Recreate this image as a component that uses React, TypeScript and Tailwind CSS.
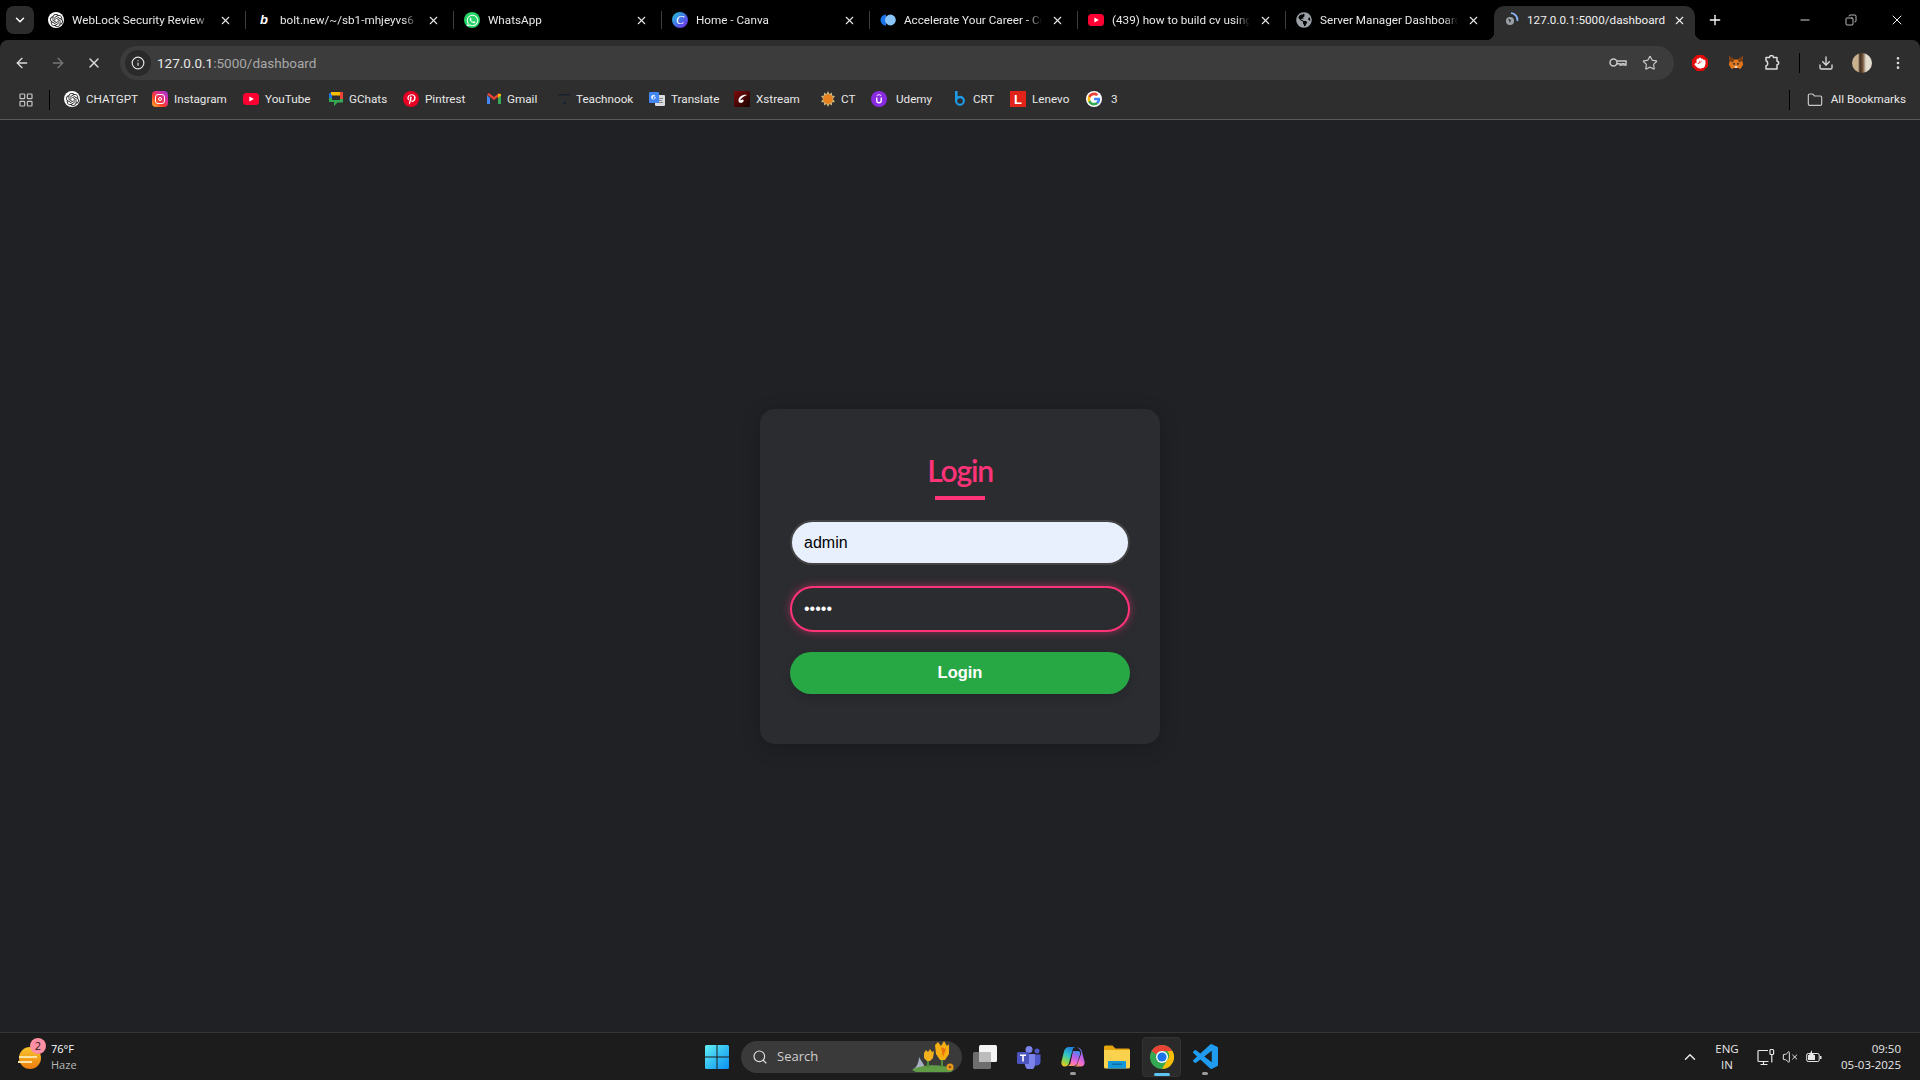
import React from 'react';
import {
  ArrowLeft, ArrowRight, ChevronDown, ChevronUp, Copy, Download, EllipsisVertical, Folder, Hand, Info,
  LayoutGrid, Minus, Plus, Search, Star, VolumeX, X,
} from 'lucide-react';
import { FaGlobeAmericas, FaPinterestP, FaWhatsapp } from 'react-icons/fa';
import { SiOpenai } from 'react-icons/si';

const ChatGptIcon = () => (
  <div className="w-4 h-4 rounded-full bg-white flex items-center justify-center text-[#222] shrink-0">
    <SiOpenai size={13} />
  </div>
);

const WhatsAppIcon = () => (
  <div className="w-4 h-4 rounded-full bg-[#25d366] flex items-center justify-center text-white shrink-0">
    <FaWhatsapp size={13} />
  </div>
);

const YouTubeIcon = () => (
  <svg viewBox="0 0 16 16" className="w-4 h-4 shrink-0">
    <rect x="0" y="2" width="16" height="12" rx="3.5" fill="#ff0033" />
    <path d="M6.4 5.5 10.8 8l-4.4 2.5z" fill="#fff" />
  </svg>
);

const CanvaIcon = () => (
  <div className="w-4 h-4 rounded-full bg-[linear-gradient(135deg,#1fc8d8,#4d5fe8_60%,#7d2ae8)] flex items-center justify-center text-white text-[12px] italic font-['Liberation_Serif',serif] shrink-0">
    C
  </div>
);

const CareerIcon = () => (
  <svg viewBox="0 0 16 16" className="w-4 h-4 shrink-0">
    <path d="M6 2.5a5.5 5.5 0 0 0 0 11z" fill="#1a73e8" />
    <circle cx="10.4" cy="8" r="5.4" fill="#8ac4f8" />
  </svg>
);

const LoadingIcon = () => (
  <svg viewBox="0 0 16 16" className="w-4 h-4 shrink-0">
    <circle cx="7" cy="9" r="4" fill="#9aa0a6" />
    <path d="M5 6.5 8 8l-1 3z" fill="#2e2e2e" />
    <path d="M8 1.2A6.8 6.8 0 0 1 14.4 9" stroke="#8ab4f8" strokeWidth="1.8" fill="none" />
  </svg>
);

const InstagramIcon = () => (
  <div className="w-4 h-4 rounded-[4px] bg-[linear-gradient(45deg,#fdb42a,#f9382e_40%,#d82ca0_70%,#8a3ad8)] flex items-center justify-center shrink-0">
    <div className="w-[10px] h-[10px] rounded-[3px] border border-white flex items-center justify-center">
      <div className="w-1 h-1 rounded-full border border-white" />
    </div>
  </div>
);

const GChatIcon = () => (
  <svg viewBox="0 0 16 16" className="w-4 h-4 shrink-0">
    <path d="M1 2.5 4 1v10l-3 0z" fill="#1a73e8" />
    <path d="M3 1h9v3.5H4L3 3z" fill="#fbbc04" />
    <path d="M12 1h3v8l-3 2z" fill="#ea4335" />
    <path d="M1 11h5v4l3.5-3.5H15V8h-3v1H4V7H1z" fill="#34a853" />
  </svg>
);

const PinterestIcon = () => (
  <div className="w-4 h-4 rounded-full bg-[#e60023] flex items-center justify-center text-white shrink-0">
    <FaPinterestP size={11} />
  </div>
);

const GmailIcon = () => (
  <svg viewBox="0 0 16 16" className="w-4 h-4 shrink-0">
    <path d="M1 4v9h3V7z" fill="#4285f4" />
    <path d="M12 7v6h3V4z" fill="#34a853" />
    <path d="M1 3.5 8 9l7-5.5L13 2 8 6 3 2z" fill="#ea4335" />
    <path d="M12 3v4l3-2.5V3z" fill="#fbbc04" />
  </svg>
);

const TeachnookIcon = () => (
  <svg viewBox="0 0 16 16" className="w-4 h-4 shrink-0">
    <path d="M1 3h12v1.4H1z" fill="#16212e" />
    <path d="M6 11h3v2H6z" fill="#16212e" />
  </svg>
);

const TranslateIcon = () => (
  <svg viewBox="0 0 16 16" className="w-4 h-4 shrink-0">
    <rect x="6" y="4" width="10" height="11" rx="1" fill="#dadce0" />
    <path d="M9 7h5v1H9zm1 2h3v1h-3zm-1 2h5v1H9z" fill="#80868b" />
    <rect x="0" y="1" width="10" height="11" rx="1" fill="#4285f4" />
    <path d="M6.8 6.2H5v1h1.1a1.3 1.3 0 1 1-.4-1.6l.7-.7a2.3 2.3 0 1 0 .4 1.3z" fill="#fff" />
  </svg>
);

const XstreamIcon = () => (
  <svg viewBox="0 0 16 16" className="w-4 h-4 shrink-0">
    <defs>
      <linearGradient id="xs" x1="0" y1="0" x2="1" y2="1">
        <stop offset="0" stopColor="#7c0a0a" />
        <stop offset="1" stopColor="#1a0202" />
      </linearGradient>
    </defs>
    <rect width="16" height="16" rx="1" fill="url(#xs)" />
    <path d="M13 4C9 3 4 6 4.5 10c.3 2 3 2.5 4.5 1 1-1 1-2.500-.5-2.500-1 0-1.500.8-2.500 1C7 7 10 5 13 4z" fill="#fff" />
  </svg>
);

const CtIcon = () => (
  <svg viewBox="0 0 16 16" className="w-4 h-4 shrink-0">
    <path d="M8 0l1.500 3L12 1.500 12 4.500 15 5 13 8l2 3-3 .5 0 3L9.500 13 8 16l-1.500-3L4 14.500 4 11.500 1 11l2-3-2-3 3-.5 0-3L6.500 3z" fill="#c9b27a" />
    <circle cx="8" cy="8" r="4.800" fill="#e8821e" />
  </svg>
);

const UdemyIcon = () => (
  <div className="w-4 h-4 rounded-full bg-[#8a2be2] flex items-center justify-center shrink-0">
    <svg viewBox="0 0 16 16" className="w-3 h-3">
      <path d="M5 6v4a3 3 0 0 0 6 0V6" stroke="#fff" strokeWidth="1.800" fill="none" />
      <path d="M5 3.500 8 2l3 1.500" stroke="#fff" strokeWidth="1.200" fill="none" />
    </svg>
  </div>
);

const CrtIcon = () => (
  <svg viewBox="0 0 16 16" className="w-4 h-4 shrink-0">
    <path d="M3 0h2.600v5.400A5 5 0 1 1 3 9.800zm5 7.200a2.700 2.700 0 1 0 0 5.600 2.700 2.700 0 0 0 0-5.600z" fill="#1e9be8" fillRule="evenodd" />
  </svg>
);

const LenovoIcon = () => (
  <div className="w-4 h-4 bg-[#e2231a] flex items-center justify-center text-white text-[13px] font-bold font-['Liberation_Sans',sans-serif] shrink-0">
    L
  </div>
);

const GoogleIcon = () => (
  <div className="w-4 h-4 rounded-full bg-white flex items-center justify-center shrink-0">
    <svg viewBox="0 0 24 24" className="w-[14px] h-[14px]">
      <path d="M22.560 12.250c0-.780-.070-1.530-.200-2.250H12v4.260h5.920c-.260 1.370-1.040 2.530-2.210 3.310v2.770h3.570c2.080-1.920 3.280-4.740 3.280-8.090z" fill="#4285f4" />
      <path d="M12 23c2.970 0 5.460-.980 7.280-2.660l-3.570-2.770c-.980.660-2.230 1.060-3.710 1.060-2.860 0-5.290-1.930-6.160-4.530H2.180v2.840C3.990 20.530 7.700 23 12 23z" fill="#34a853" />
      <path d="M5.840 14.090c-.220-.660-.350-1.360-.350-2.090s.130-1.430.350-2.090V7.070H2.180C1.430 8.550 1 10.220 1 12s.430 3.450 1.180 4.930l3.660-2.840z" fill="#fbbc05" />
      <path d="M12 5.380c1.620 0 3.060.560 4.210 1.640l3.150-3.150C17.450 2.090 14.970 1 12 1 7.700 1 3.990 3.470 2.180 7.070l3.660 2.840c.870-2.600 3.300-4.530 6.160-4.530z" fill="#ea4335" />
    </svg>
  </div>
);

const GlobeIcon = () => <FaGlobeAmericas size={16} className="text-[#9aa0a6] shrink-0" />;

const BoltIcon = () => (
  <div className="w-4 h-4 flex items-center justify-center text-white text-[13px] font-bold italic font-['Liberation_Sans',sans-serif] shrink-0">
    b
  </div>
);

const KeyIcon = () => (
  <svg viewBox="0 0 18 12" className="w-[18px] h-3 shrink-0" fill="none" stroke="#c7c7c7" strokeWidth="1.5">
    <circle cx="4.500" cy="5.500" r="3.500" />
    <path d="M8 4h9v4h-2V6.800h-2V8h-2V6.800H8" />
  </svg>
);

const ExtensionIcon = () => (
  <svg viewBox="0 0 16 16" className="w-4 h-4 shrink-0" fill="none" stroke="#dcdcdc" strokeWidth="1.500" strokeLinejoin="round">
    <path d="M2 2.500h3.500a2 2 0 0 1 4 0H13v3.800a1.700 1.700 0 0 1 0 3.400V14H2v-3.200a2 2 0 0 0 1.500-2.800A2 2 0 0 0 2 5.700z" />
  </svg>
);

const FoxIcon = () => (
  <svg viewBox="0 0 16 16" className="w-4 h-4 shrink-0">
    <path d="M1 1l5 3.500h4L15 1l-.8 5 1 3.500L12.500 14 10 13H6l-2.500 1L.8 9.500 1.800 6z" fill="#e2761b" />
    <path d="M1 1l5 3.500-1 3-3.200-1.500zM15 1l-5 3.500 1 3 3.200-1.500z" fill="#763d16" />
    <path d="M4.500 8.500 7 8l-.5 2.500zM11.500 8.500 9 8l.5 2.500z" fill="#233447" />
    <path d="M6.500 11h3l-.5 2H7z" fill="#f6d9c0" />
  </svg>
);

const NetworkIcon = () => (
  <svg viewBox="0 0 18 18" className="w-[18px] h-[18px] shrink-0" fill="none" stroke="#e8e8e8" strokeWidth="1.200">
    <path d="M11 2.500H2a1 1 0 0 0-1 1v9a1 1 0 0 0 1 1h9.500" />
    <path d="M6.500 13.500v2.800M3.500 16.500h7" />
    <rect x="13" y="1.500" width="3.600" height="5" rx="1" />
    <path d="M14.800 6.500v8" />
  </svg>
);

const tabs = [
  { title: 'WebLock Security Review', icon: <ChatGptIcon />, sep: true },
  { title: 'bolt.new/~/sb1-mhjeyvs6', icon: <BoltIcon />, sep: true },
  { title: 'WhatsApp', icon: <WhatsAppIcon />, sep: true },
  { title: 'Home - Canva', icon: <CanvaIcon />, sep: true },
  { title: 'Accelerate Your Career - Coursera', icon: <CareerIcon />, sep: true },
  { title: '(439) how to build cv using html', icon: <YouTubeIcon />, sep: true },
  { title: 'Server Manager Dashboard', icon: <GlobeIcon />, sep: false },
];

const bookmarks = [
  { label: 'CHATGPT', icon: <ChatGptIcon />, cls: 'w-[88px] gap-[6px]' },
  { label: 'Instagram', icon: <InstagramIcon />, cls: 'w-[91px] gap-[6px]' },
  { label: 'YouTube', icon: <YouTubeIcon />, cls: 'w-[85px] gap-[6px]' },
  { label: 'GChats', icon: <GChatIcon />, cls: 'w-[75px] gap-[5px]' },
  { label: 'Pintrest', icon: <PinterestIcon />, cls: 'w-[83px] gap-[6px]' },
  { label: 'Gmail', icon: <GmailIcon />, cls: 'w-[71px] gap-[5px]' },
  { label: 'Teachnook', icon: <TeachnookIcon />, cls: 'w-[92px] gap-[3px]' },
  { label: 'Translate', icon: <TranslateIcon />, cls: 'w-[85px] gap-[6px]' },
  { label: 'Xstream', icon: <XstreamIcon />, cls: 'w-[86px] gap-[6px]' },
  { label: 'CT', icon: <CtIcon />, cls: 'w-[51px] gap-[5px]' },
  { label: 'Udemy', icon: <UdemyIcon />, cls: 'w-[81px] gap-[9px]' },
  { label: 'CRT', icon: <CrtIcon />, cls: 'w-[58px] gap-[5px]' },
  { label: 'Lenevo', icon: <LenovoIcon />, cls: 'w-[76px] gap-[6px]' },
  { label: '3', icon: <GoogleIcon />, cls: 'w-[40px] gap-[9px]' },
];

const Tab: React.FC<{ title: string; icon: React.ReactNode; sep: boolean }> = ({ title, icon, sep }) => (
  <div className="w-[208px] h-full flex items-center pl-2 text-[11.7px] text-[#e8e8e8]">
    {icon}
    <span className="ml-2 mr-[7px] pt-px flex-1 min-w-0 overflow-hidden whitespace-nowrap [mask-image:linear-gradient(to_right,black_calc(100%-14px),transparent)]">
      {title}
    </span>
    <X size={13} strokeWidth={2} className="mx-[2px] text-[#e8e8e8] shrink-0" />
    <div className={`w-px h-[18px] ml-[11px] mr-[2px] ${sep ? 'bg-[#3f3f3f]' : 'bg-transparent'}`} />
  </div>
);

const TitleBar = () => (
  <div className="h-10 bg-black flex items-center pl-[6px]">
    <div className="w-[28px] h-[28px] rounded-lg bg-[#2c2c2c] flex items-center justify-center text-white mr-[6px]">
      <ChevronDown size={14} strokeWidth={2.5} />
    </div>
    <div className="flex h-full">
      {tabs.map((t) => (
        <Tab key={t.title} {...t} />
      ))}
    </div>
    <div className="relative w-[201px] h-[34px] self-end ml-[-2px] pb-[6px] bg-[#2e2e2e] rounded-t-[10px] flex items-center pl-[9px] pr-[9px] text-[11.7px] text-[#f0f0f0]">
      <div className="absolute left-[-8px] bottom-0 w-2 h-2 bg-[radial-gradient(circle_at_0_0,transparent_8px,#2e2e2e_8.5px)]" />
      <div className="absolute right-[-8px] bottom-0 w-2 h-2 bg-[radial-gradient(circle_at_100%_0,transparent_8px,#2e2e2e_8.5px)]" />
      <LoadingIcon />
      <span className="ml-2 pt-px flex-1 min-w-0 whitespace-nowrap overflow-hidden">127.0.0.1:5000/dashboard</span>
      <X size={13} strokeWidth={2} className="shrink-0 ml-1" />
    </div>
    <Plus size={16} strokeWidth={2} className="ml-3 text-white" />
    <div className="ml-auto flex items-center text-[#f0f0f0]">
      <div className="w-[46px] flex justify-center">
        <Minus size={14} strokeWidth={1.5} />
      </div>
      <div className="w-[46px] flex justify-center">
        <Copy size={12} strokeWidth={1.5} className="-scale-x-100" />
      </div>
      <div className="w-[46px] flex justify-center">
        <X size={16} strokeWidth={1.5} />
      </div>
    </div>
  </div>
);

const Toolbar = () => (
  <div className="h-10 pt-[6px] bg-[#2e2e2e] rounded-t-lg text-[#c7c7c7]">
    <div className="h-[34px] flex items-center">
      <div className="w-[120px] flex items-center pl-[14px] shrink-0">
        <ArrowLeft size={16} strokeWidth={2} className="text-[#dcdcdc]" />
        <ArrowRight size={16} strokeWidth={2} className="ml-5 text-[#777]" />
        <X size={16} strokeWidth={2} className="ml-5 text-[#dcdcdc]" />
      </div>
      <div className="w-[1554px] h-[34px] rounded-full bg-[#3c3c3c] flex items-center shrink-0">
        <div className="ml-[5px] w-[26px] h-[26px] rounded-full bg-[#2a2a2a] flex items-center justify-center text-[#e3e3e3]">
          <Info size={14} strokeWidth={2} />
        </div>
        <span className="ml-[6px] text-[13.5px] text-[#e8e8e8]">
          127.0.0.1<span className="text-[#a8a8a8]">:5000/dashboard</span>
        </span>
        <div className="ml-auto flex items-center gap-[15px] pr-[16px]">
          <KeyIcon />
          <Star size={16} strokeWidth={1.75} />
        </div>
      </div>
      <div className="flex-1 flex items-center pl-[18px]">
        <div className="w-4 h-4 bg-[#e20a0a] [clip-path:polygon(30%_0,70%_0,100%_30%,100%_70%,70%_100%,30%_100%,0_70%,0_30%)] flex items-center justify-center shrink-0">
          <Hand size={12} fill="#fff" className="text-white" />
        </div>
        <div className="ml-[20px]">
          <FoxIcon />
        </div>
        <div className="ml-[20px]">
          <ExtensionIcon />
        </div>
        <div className="w-px h-[20px] bg-black ml-[19px] shrink-0" />
        <Download size={16} strokeWidth={2} className="ml-[18px] text-[#dcdcdc] shrink-0" />
        <div className="ml-[18px] w-5 h-5 rounded-full bg-[linear-gradient(90deg,#c9b08f_0%,#c9b08f_30%,#3d2a1f_40%,#7a5a40_55%,#e3dccf_70%)] shrink-0" />
        <EllipsisVertical size={16} strokeWidth={2} className="ml-[18px] text-[#dcdcdc] shrink-0" />
      </div>
    </div>
  </div>
);

const BookmarksBar = () => (
  <div className="h-10 bg-[#2e2e2e] border-b border-[#5a5a5a] flex items-center text-[11.7px] text-[#e8e8e8]">
    <div className="w-[49px] flex justify-end pr-[15px] shrink-0">
      <LayoutGrid size={16} strokeWidth={1.75} className="text-[#c7c7c7]" />
    </div>
    <div className="w-px h-[20px] bg-black shrink-0" />
    <div className="ml-[14px] flex items-center">
      {bookmarks.map((b) => (
        <div key={b.label} className={`flex items-center shrink-0 ${b.cls}`}>
          {b.icon}
          <span className="whitespace-nowrap">{b.label}</span>
        </div>
      ))}
    </div>
    <div className="ml-auto flex items-center pr-[14px]">
      <div className="w-px h-[20px] bg-black mr-[17px]" />
      <Folder size={16} strokeWidth={1.75} className="text-[#c7c7c7] mr-[8px]" />
      <span>All Bookmarks</span>
    </div>
  </div>
);

const LoginCard = () => (
  <div className="w-[400px] h-[335px] px-[30px] pt-[39px] rounded-[15px] bg-[#2b2c30] shadow-[0_4px_20px_rgba(0,0,0,0.2)] flex flex-col">
    <h1 className="text-center text-[30px] leading-[44px] font-semibold tracking-[-1.2px] text-[#ff3378] font-['Lato',sans-serif]">
      Login
    </h1>
    <div className="w-[50px] h-1 mx-auto mt-[4px] bg-[#ff3378]" />
    <input
      readOnly
      type="text"
      value="admin"
      className="mt-5 w-full h-[45px] px-[12px] pt-px rounded-full border-2 border-[#444] bg-[#e8f0fe] text-[16px] text-black outline-none font-['Liberation_Sans',sans-serif]"
    />
    <input
      readOnly
      type="password"
      value="admin"
      className="mt-[21px] w-full h-[46px] px-[12px] rounded-full border-2 border-[#ff3378] bg-[#2b2c30] text-[16px] text-white outline-none shadow-[0_0_8px_rgba(255,51,120,0.5)] font-['Liberation_Sans',sans-serif]"
    />
    <button className="mt-5 w-full h-[42px] rounded-full bg-[#28a745] text-white text-[16.5px] font-bold shadow-[0_4px_10px_rgba(0,0,0,0.15)] font-['Liberation_Sans',sans-serif]">
      Login
    </button>
  </div>
);

const WindowsLogo = () => (
  <svg viewBox="0 0 24 24" className="w-[24px] h-[24px] shrink-0">
    <defs>
      <linearGradient id="win" x1="0" y1="0" x2="1" y2="1">
        <stop offset="0" stopColor="#5ff0f5" />
        <stop offset="1" stopColor="#0a8ff0" />
      </linearGradient>
    </defs>
    <path d="M0 1.500A1.500 1.500 0 0 1 1.500 0h10v11.500H0zM12.500 0h10A1.500 1.500 0 0 1 24 1.500v10H12.500zM0 12.500h11.500V24h-10A1.500 1.500 0 0 1 0 22.500zM12.500 12.500H24v10a1.500 1.500 0 0 1-1.500 1.500h-10z" fill="url(#win)" />
  </svg>
);

const Flowers = () => (
  <svg viewBox="0 0 44 32" className="w-[44px] h-[32px] absolute right-[6px] top-0">
    <path d="M1 28c4-1 6-8 6-12 2 4 6 8 6 12z" fill="#aab0c4" />
    <path d="M0 29c10-6 30-6 42-1l-3 3H4z" fill="#5f9c45" />
    <path d="M16 26V16M30 26V14" stroke="#4f8f3a" strokeWidth="2" />
    <path d="M12 12l2-3 2 2 2-3 2 3 2-1-1 7-3 3h-3l-3-3z" fill="#f2b01e" />
    <path d="M23 4l3-3 3 4 3-5 3 5 2-2 0 10-4 6h-5l-4-6z" fill="#f5ae14" />
    <path d="M29 6l2 10 3-8z" fill="#e8730c" />
    <circle cx="38" cy="26" r="3.500" fill="#e89a1c" />
    <circle cx="38" cy="26" r="1.300" fill="#8a4a10" />
  </svg>
);

const TaskView = () => (
  <svg viewBox="0 0 24 24" className="w-[24px] h-[24px] shrink-0">
    <rect x="0" y="7" width="18" height="17" rx="1.500" fill="#6e6e6e" />
    <rect x="6" y="0" width="18" height="17" rx="1.500" fill="#f4f4f4" />
    <rect x="6" y="7" width="12" height="10" fill="#bcbcbc" />
  </svg>
);

const TeamsIcon = () => (
  <svg viewBox="0 0 24 24" className="w-[24px] h-[24px] shrink-0">
    <circle cx="12" cy="4.500" r="3.500" fill="#7b83eb" />
    <circle cx="20" cy="6" r="2.500" fill="#5059c9" />
    <path d="M16 9.500h7.500v7a4 4 0 0 1-7.500 2z" fill="#5059c9" />
    <path d="M6 9h12v10a5 5 0 0 1-10 1.500z" fill="#7b83eb" />
    <rect x="0" y="7" width="12" height="12" rx="1.500" fill="#4b53bc" />
    <path d="M3 9.500h6v1.500H6.800v5.500H5.200V11H3z" fill="#fff" />
  </svg>
);

const CopilotIcon = () => (
  <svg viewBox="0 0 24 24" className="w-[24px] h-[24px] shrink-0">
    <defs>
      <linearGradient id="cpa" x1="0.6" y1="0" x2="0.2" y2="1">
        <stop offset="0" stopColor="#1f7fe0" />
        <stop offset="0.45" stopColor="#35c8c0" />
        <stop offset="0.75" stopColor="#8ad44b" />
        <stop offset="1" stopColor="#f5c32c" />
      </linearGradient>
      <linearGradient id="cpb" x1="0.8" y1="0" x2="0.3" y2="1">
        <stop offset="0" stopColor="#3f8cf0" />
        <stop offset="0.4" stopColor="#b95ee8" />
        <stop offset="0.75" stopColor="#f56fc8" />
        <stop offset="1" stopColor="#f59a5a" />
      </linearGradient>
    </defs>
    <path d="M8 2h7c-2 0-3 1-3.500 3L8 18c-.600 2-2 3.500-4 3.500C1.500 21.500 0 19.500.5 16.500L3 6.500C3.700 3.700 5.500 2 8 2z" fill="url(#cpa)" />
    <path d="M16 2.500c2.700 0 4.500 1.700 5 4.500l2.500 9.500c.6 3-1 5-3.500 5h-7c2 0 3-1 3.500-3L20 9c.4-2.800-1-5.500-4-6.500z" fill="url(#cpb)" />
    <path d="M12 6h5c2 0 2.500 1.500 2 3.500l-2.500 8c-.5 2-2 3.500-4 3.500H6c2 0 3-1.500 3.500-3L12 6z" fill="url(#cpb)" />
  </svg>
);

const FilesIcon = () => (
  <svg viewBox="0 0 26 24" className="w-[26px] h-[24px] shrink-0">
    <path d="M0 2a1.500 1.500 0 0 1 1.500-1.500h7l3 3h13A1.500 1.500 0 0 1 26 5v3H0z" fill="#e5a50f" />
    <path d="M0 5h26v17a1.500 1.500 0 0 1-1.500 1.500h-23A1.500 1.500 0 0 1 0 22z" fill="#fbd24e" />
    <path d="M5 16h16a1 1 0 0 1 1 1v6.500H4V17a1 1 0 0 1 1-1z" fill="#1597d8" />
    <rect x="8" y="18.500" width="10" height="1.500" fill="#0d6fa8" />
  </svg>
);

const ChromeIcon = () => (
  <svg viewBox="0 0 24 24" className="w-[24px] h-[24px] shrink-0">
    <circle cx="12" cy="12" r="12" fill="#34a853" />
    <path d="M12 0a12 12 0 0 1 10.400 6H12a6 6 0 0 0-5.500 3.600L1.600 6A12 12 0 0 1 12 0z" fill="#ea4335" />
    <path d="M22.400 6A12 12 0 0 1 12 24l5.200-9a6 6 0 0 0 0-9z" fill="#fbbc04" />
    <circle cx="12" cy="12" r="6" fill="#fff" />
    <circle cx="12" cy="12" r="4.600" fill="#1a73e8" />
  </svg>
);

const VsCodeIcon = () => (
  <svg viewBox="0 0 24 24" className="w-[25px] h-[25px] shrink-0">
    <path
      fill="#1f9cf0"
      d="M23.150 2.587L18.210.21a1.494 1.494 0 0 0-1.705.29l-9.460 8.630-4.120-3.128a.999.999 0 0 0-1.276.057L.327 7.261A1 1 0 0 0 .326 8.740L3.899 12 .326 15.260a1 1 0 0 0 .001 1.479L1.650 17.940a.999.999 0 0 0 1.276.057l4.120-3.128 9.460 8.630a1.492 1.492 0 0 0 1.704.29l4.942-2.377A1.500 1.500 0 0 0 24 20.060V3.939a1.500 1.500 0 0 0-.850-1.352zm-5.146 14.861L10.826 12l7.178-5.448v10.896z"
    />
  </svg>
);

const Taskbar = () => (
  <div className="h-12 bg-[#1c1c1c] border-t border-[#363636] flex items-center text-[#e8e8e8] font-['Open_Sans',sans-serif]">
    <div className="w-[705px] flex items-center pl-[19px] shrink-0">
      <div className="relative w-[24px] h-[24px] mt-1 shrink-0">
        <div className="w-[22px] h-[22px] rounded-full bg-[linear-gradient(#f7c62f,#ee7d0c)]" />
        <div className="absolute left-0 top-[9px] w-[18px] h-[2px] bg-[#fbe3a3]" />
        <div className="absolute left-[-1px] top-[14px] w-[14px] h-[2px] bg-[#fbe3a3]" />
        <div className="absolute right-[-3px] top-[-9px] w-4 h-4 rounded-full bg-[#ff8fa3] text-[#222] text-[11px] leading-4 text-center">
          2
        </div>
      </div>
      <div className="ml-[8px] text-[11px] leading-[16px]">
        <div className="text-white">76°F</div>
        <div className="text-[#b8b8b8]">Haze</div>
      </div>
    </div>
    <WindowsLogo />
    <div className="relative ml-[12px] w-[221px] h-[32px] rounded-full bg-[#3a3a3a] flex items-center pl-[11px] text-[#cfcfcf] text-[13px] shrink-0">
      <Search size={16} strokeWidth={1.75} className="text-[#e0e0e0]" />
      <span className="ml-[9px]">Search</span>
      <Flowers />
    </div>
    <div className="ml-[11px]">
      <TaskView />
    </div>
    <div className="ml-[20px]">
      <TeamsIcon />
    </div>
    <div className="relative ml-[20px]">
      <CopilotIcon />
      <div className="absolute left-[9px] bottom-[-6px] w-[6px] h-[3px] rounded-full bg-[#9a9a9a]" />
    </div>
    <div className="ml-[19px]">
      <FilesIcon />
    </div>
    <div className="relative ml-[12px] w-[39px] h-[40px] rounded-[4px] bg-[#2a2a2a] border border-[#333] flex items-center justify-center">
      <ChromeIcon />
      <div className="absolute left-[11px] bottom-0 w-[16px] h-[3px] rounded-full bg-[#5cc4f5]" />
    </div>
    <div className="relative ml-[12px]">
      <VsCodeIcon />
      <div className="absolute left-[9px] bottom-[-6px] w-[6px] h-[3px] rounded-full bg-[#9a9a9a]" />
    </div>
    <div className="ml-auto flex items-center pr-[19px] text-[12px]">
      <ChevronUp size={18} strokeWidth={2} className="text-[#e8e8e8]" />
      <div className="ml-[8px] w-[40px] text-center leading-[16px] text-[11.5px]">
        <div>ENG</div>
        <div>IN</div>
      </div>
      <div className="ml-[10px]">
        <NetworkIcon />
      </div>
      <VolumeX size={16} strokeWidth={1.5} className="ml-[7px]" />
      <svg viewBox="0 0 16 16" className="w-4 h-4 ml-[8px]">
        <rect x="0.700" y="4.500" width="12.500" height="8" rx="1.500" fill="none" stroke="#e8e8e8" />
        <rect x="2" y="6" width="7" height="5" fill="#e8e8e8" />
        <rect x="14" y="7" width="1.500" height="3" fill="#e8e8e8" />
        <path d="M6 1 3 6h2L4 9l4-4H6z" fill="#e8e8e8" />
      </svg>
      <div className="ml-[17px] w-[62px] text-right leading-[16px] text-[11.5px]">
        <div>09:50</div>
        <div>05-03-2025</div>
      </div>
    </div>
  </div>
);

export default function App() {
  return (
    <div className="w-[1920px] h-[1080px] flex flex-col overflow-hidden bg-black font-['Roboto',sans-serif]">
      <TitleBar />
      <Toolbar />
      <BookmarksBar />
      <main className="flex-1 bg-[#1f2125] flex items-center justify-center">
        <LoginCard />
      </main>
      <Taskbar />
    </div>
  );
}
